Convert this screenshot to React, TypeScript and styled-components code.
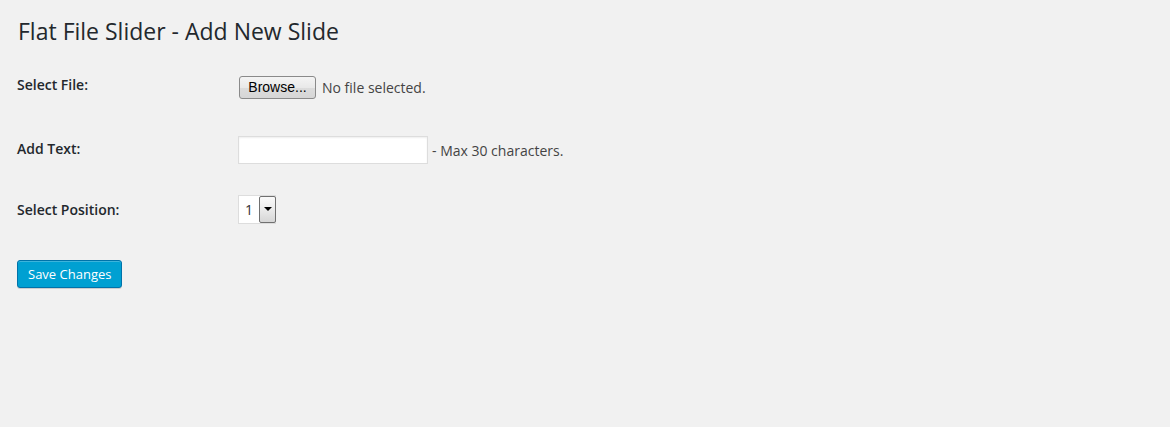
import React from "react";
import styled, { createGlobalStyle } from "styled-components";

const Global = createGlobalStyle`
  html, body {
    margin: 0;
    padding: 0;
    background: #f1f1f1;
  }
  body {
    font-family: "Open Sans", sans-serif;
    color: #444;
    font-size: 13px;
  }
`;

const Wrap = styled.div`
  padding: 17px 20px 0 17px;
  min-height: 427px;
  box-sizing: border-box;
`;

const Title = styled.h2`
  margin: 0;
  font-family: "Open Sans", sans-serif;
  font-size: 23px;
  font-weight: 400;
  line-height: 29px;
  color: #23282d;
  padding-left: 1px;
`;

const Form = styled.div`
  display: flex;
  flex-direction: column;
  margin-top: 10px;
`;

const Row = styled.div<{ $h: number }>`
  display: flex;
  align-items: flex-start;
  height: ${(p) => p.$h}px;
`;

const Label = styled.div`
  width: 221px;
  flex: none;
  padding-top: 20px;
  font-size: 14px;
  font-weight: 600;
  line-height: 1.3;
  color: #23282d;
`;

const Field = styled.div<{ $pt: number }>`
  display: flex;
  align-items: center;
  padding-top: ${(p) => p.$pt}px;
  gap: 6px;
`;

const BrowseButton = styled.button`
  box-sizing: border-box;
  width: 77px;
  height: 23px;
  margin-left: 1px;
  padding: 0 0 1px;
  border: 1px solid #8a8a8a;
  border-radius: 3px;
  background: linear-gradient(#f4f4f4, #e9e9e9 50%, #dcdcdc 51%, #d6d6d6);
  font-family: "Liberation Sans", Arial, sans-serif;
  font-size: 14px;
  color: #000;
`;

const Note = styled.span`
  font-size: 14px;
  color: #444;
  line-height: 1.3;
  margin-top: 2px;
`;

const TextInput = styled.input`
  box-sizing: border-box;
  width: 190px;
  height: 28px;
  border: 1px solid #ddd;
  background: #fff;
  box-shadow: inset 0 1px 2px rgba(0, 0, 0, 0.07);
  outline: none;
  padding: 3px 5px;
  font-family: "Open Sans", sans-serif;
  font-size: 14px;
`;

const Hint = styled.span`
  font-size: 14px;
  color: #444;
  margin-left: -2px;
`;

const SelectBox = styled.div`
  box-sizing: border-box;
  display: flex;
  align-items: center;
  width: 38px;
  height: 29px;
  border: 1px solid #ddd;
  background: #fff;
  padding: 1px 0 1px 6px;
  font-size: 14px;
  color: #333;
`;

const SelectValue = styled.span`
  flex: 1;
`;

const Arrow = styled.div`
  box-sizing: border-box;
  width: 17px;
  height: 27px;
  margin-right: -1px;
  border: 1px solid #707070;
  border-radius: 2px;
  background: linear-gradient(#fafafa, #ececec 45%, #d6d6d6);
  display: flex;
  align-items: center;
  justify-content: center;
  &::after {
    content: "";
    border-left: 4px solid transparent;
    border-right: 4px solid transparent;
    border-top: 4px solid #000;
    margin-top: -1px;
  }
`;

const SaveButton = styled.button`
  box-sizing: border-box;
  height: 28px;
  margin-top: 14px;
  padding: 0 10px 1px;
  align-self: flex-start;
  border: 1px solid #0073aa;
  border-radius: 3px;
  background: #00a0d2;
  color: #fff;
  font-family: "Open Sans", sans-serif;
  font-size: 13px;
  line-height: 26px;
  box-shadow: inset 0 1px 0 rgba(120, 200, 230, 0.5), 0 1px 0 rgba(0, 0, 0, 0.15);
  cursor: pointer;
`;

export default function App() {
  return (
    <>
      <Global />
      <Wrap>
        <Title>Flat File Slider - Add New Slide</Title>
        <Form>
          <Row $h={64}>
            <Label>Select File:</Label>
            <Field $pt={20}>
              <BrowseButton type="button">Browse...</BrowseButton>
              <Note>No file selected.</Note>
            </Field>
          </Row>
          <Row $h={61}>
            <Label>Add Text:</Label>
            <Field $pt={16}>
              <TextInput type="text" />
              <Hint>- Max 30 characters.</Hint>
            </Field>
          </Row>
          <Row $h={65}>
            <Label>Select Position:</Label>
            <Field $pt={14}>
              <SelectBox>
                <SelectValue>1</SelectValue>
                <Arrow />
              </SelectBox>
            </Field>
          </Row>
          <SaveButton type="button">Save Changes</SaveButton>
        </Form>
      </Wrap>
    </>
  );
}
